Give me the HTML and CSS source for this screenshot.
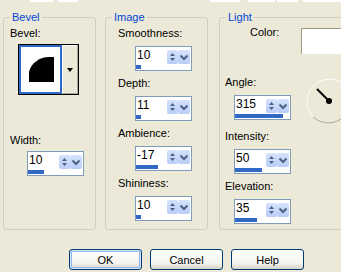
FILE: index.html
```html
<!DOCTYPE html>
<html lang="en">
<head>
    <meta charset="UTF-8">
    <title>Inner Bevel</title>
    <link rel="stylesheet" href="styles.css">
</head>
<body>
    <div class="dialog">
        <div class="top-strip">
            <span class="seg seg-a"></span>
            <span class="seg seg-b"></span>
            <span class="seg seg-c"></span>
            <span class="seg seg-d"></span>
            <span class="seg seg-e"></span>
            <span class="seg seg-f"></span>
        </div>

        <div class="groups">
            <fieldset class="group bevel">
                <legend>Bevel</legend>
                <div class="label first">Bevel:</div>
                <div class="preview">
                    <div class="preview-img">
                        <svg width="39" height="45" viewBox="0 0 39 45">
                            <path d="M8 35 V25 C10 16 19 10 28 10 H33 V35 Z" fill="#000"/>
                        </svg>
                    </div>
                    <div class="preview-drop"><span class="drop-arrow"></span></div>
                </div>
                <div class="label width-label">Width:</div>
                <div class="spin width-spin">
                    <div class="spin-main">
                        <span class="spin-value">10</span>
                        <span class="spin-btn">
                            <svg width="11" height="14" viewBox="0 0 11 14"><path d="M3 6 L5.5 3 L8 6 Z M3 8 L8 8 L5.5 11 Z" fill="#4d6185"/></svg>
                        </span>
                        <span class="spin-btn drop">
                            <svg width="12" height="14" viewBox="0 0 12 14"><polyline points="2.5,5.5 6,9 9.5,5.5" fill="none" stroke="#4d6185" stroke-width="2"/></svg>
                        </span>
                    </div>
                    <div class="spin-bar"><div class="fill" style="width: 16px"></div></div>
                </div>
            </fieldset>

            <fieldset class="group image">
                <legend>Image</legend>
                <div class="field first">
                    <div class="label">Smoothness:</div>
                    <div class="spin">
                        <div class="spin-main">
                            <span class="spin-value">10</span>
                            <span class="spin-btn">
                                <svg width="11" height="14" viewBox="0 0 11 14"><path d="M3 6 L5.5 3 L8 6 Z M3 8 L8 8 L5.5 11 Z" fill="#4d6185"/></svg>
                            </span>
                            <span class="spin-btn drop">
                                <svg width="12" height="14" viewBox="0 0 12 14"><polyline points="2.5,5.5 6,9 9.5,5.5" fill="none" stroke="#4d6185" stroke-width="2"/></svg>
                            </span>
                        </div>
                        <div class="spin-bar"><div class="fill" style="width: 5px"></div></div>
                    </div>
                </div>
                <div class="field">
                    <div class="label">Depth:</div>
                    <div class="spin">
                        <div class="spin-main">
                            <span class="spin-value">11</span>
                            <span class="spin-btn">
                                <svg width="11" height="14" viewBox="0 0 11 14"><path d="M3 6 L5.5 3 L8 6 Z M3 8 L8 8 L5.5 11 Z" fill="#4d6185"/></svg>
                            </span>
                            <span class="spin-btn drop">
                                <svg width="12" height="14" viewBox="0 0 12 14"><polyline points="2.5,5.5 6,9 9.5,5.5" fill="none" stroke="#4d6185" stroke-width="2"/></svg>
                            </span>
                        </div>
                        <div class="spin-bar"><div class="fill" style="width: 5px"></div></div>
                    </div>
                </div>
                <div class="field">
                    <div class="label">Ambience:</div>
                    <div class="spin">
                        <div class="spin-main">
                            <span class="spin-value">-17</span>
                            <span class="spin-btn">
                                <svg width="11" height="14" viewBox="0 0 11 14"><path d="M3 6 L5.5 3 L8 6 Z M3 8 L8 8 L5.5 11 Z" fill="#4d6185"/></svg>
                            </span>
                            <span class="spin-btn drop">
                                <svg width="12" height="14" viewBox="0 0 12 14"><polyline points="2.5,5.5 6,9 9.5,5.5" fill="none" stroke="#4d6185" stroke-width="2"/></svg>
                            </span>
                        </div>
                        <div class="spin-bar"><div class="fill" style="width: 22px"></div></div>
                    </div>
                </div>
                <div class="field">
                    <div class="label">Shininess:</div>
                    <div class="spin">
                        <div class="spin-main">
                            <span class="spin-value">10</span>
                            <span class="spin-btn">
                                <svg width="11" height="14" viewBox="0 0 11 14"><path d="M3 6 L5.5 3 L8 6 Z M3 8 L8 8 L5.5 11 Z" fill="#4d6185"/></svg>
                            </span>
                            <span class="spin-btn drop">
                                <svg width="12" height="14" viewBox="0 0 12 14"><polyline points="2.5,5.5 6,9 9.5,5.5" fill="none" stroke="#4d6185" stroke-width="2"/></svg>
                            </span>
                        </div>
                        <div class="spin-bar"><div class="fill" style="width: 5px"></div></div>
                    </div>
                </div>
            </fieldset>

            <fieldset class="group light">
                <legend>Light</legend>
                <div class="color-row">
                    <div class="label color-label">Color:</div>
                    <div class="swatch"></div>
                </div>
                <div class="angle-row">
                    <div class="field">
                        <div class="label">Angle:</div>
                        <div class="spin">
                            <div class="spin-main">
                                <span class="spin-value">315</span>
                                <span class="spin-btn">
                                    <svg width="11" height="14" viewBox="0 0 11 14"><path d="M3 6 L5.5 3 L8 6 Z M3 8 L8 8 L5.5 11 Z" fill="#4d6185"/></svg>
                                </span>
                                <span class="spin-btn drop">
                                    <svg width="12" height="14" viewBox="0 0 12 14"><polyline points="2.5,5.5 6,9 9.5,5.5" fill="none" stroke="#4d6185" stroke-width="2"/></svg>
                                </span>
                            </div>
                            <div class="spin-bar"><div class="fill" style="width: 48px"></div></div>
                        </div>
                    </div>
                    <svg class="dial" width="46" height="46" viewBox="0 0 46 46">
                        <path d="M38.9 7.1 A22.5 22.5 0 0 0 7.1 38.9" fill="none" stroke="#fff" stroke-width="1"/>
                        <path d="M7.1 38.9 A22.5 22.5 0 0 0 38.9 7.1" fill="none" stroke="#aca899" stroke-width="1"/>
                        <line x1="11" y1="11" x2="23" y2="23" stroke="#000" stroke-width="2"/>
                        <circle cx="23" cy="23" r="3" fill="#000"/>
                    </svg>
                </div>
                <div class="field">
                    <div class="label">Intensity:</div>
                    <div class="spin">
                        <div class="spin-main">
                            <span class="spin-value">50</span>
                            <span class="spin-btn">
                                <svg width="11" height="14" viewBox="0 0 11 14"><path d="M3 6 L5.5 3 L8 6 Z M3 8 L8 8 L5.5 11 Z" fill="#4d6185"/></svg>
                            </span>
                            <span class="spin-btn drop">
                                <svg width="12" height="14" viewBox="0 0 12 14"><polyline points="2.5,5.5 6,9 9.5,5.5" fill="none" stroke="#4d6185" stroke-width="2"/></svg>
                            </span>
                        </div>
                        <div class="spin-bar"><div class="fill" style="width: 27px"></div></div>
                    </div>
                </div>
                <div class="field">
                    <div class="label">Elevation:</div>
                    <div class="spin">
                        <div class="spin-main">
                            <span class="spin-value">35</span>
                            <span class="spin-btn">
                                <svg width="11" height="14" viewBox="0 0 11 14"><path d="M3 6 L5.5 3 L8 6 Z M3 8 L8 8 L5.5 11 Z" fill="#4d6185"/></svg>
                            </span>
                            <span class="spin-btn drop">
                                <svg width="12" height="14" viewBox="0 0 12 14"><polyline points="2.5,5.5 6,9 9.5,5.5" fill="none" stroke="#4d6185" stroke-width="2"/></svg>
                            </span>
                        </div>
                        <div class="spin-bar"><div class="fill" style="width: 22px"></div></div>
                    </div>
                </div>
            </fieldset>
        </div>

        <div class="buttons">
            <button class="btn default">OK</button>
            <button class="btn">Cancel</button>
            <button class="btn">Help</button>
        </div>
    </div>
</body>
</html>
```

FILE: styles.css
```css
body {
    margin: 0;
    background-color: #ece9d8;
    font-family: "Liberation Sans", Arial, sans-serif;
    font-size: 11px;
    color: #000;
    overflow: hidden;
}
.dialog {
    width: 341px;
    height: 272px;
    overflow: hidden;
}
.top-strip {
    display: flex;
    height: 2px;
}
.seg {
    display: block;
    flex-shrink: 0;
    height: 2px;
    background-color: #fff;
}
.seg-a {
    width: 23px;
    margin-left: 30px;
}
.seg-b {
    width: 20px;
    margin-left: 5px;
}
.seg-c {
    width: 30px;
    margin-left: 132px;
}
.seg-d {
    width: 27px;
    margin-left: 8px;
}
.seg-e {
    width: 21px;
    margin-left: 2px;
}
.seg-f {
    width: 40px;
    margin-left: 5px;
}
.groups {
    display: flex;
    align-items: flex-start;
    margin-top: 9px;
    padding-left: 3px;
}
.group {
    box-sizing: border-box;
    height: 219px;
    margin: 0;
    padding: 0;
    min-width: 0;
    flex-shrink: 0;
    border: 1px solid #d0d0bf;
    border-radius: 3px;
}
.group legend {
    margin-left: 6px;
    padding: 0 2px;
    color: #0046d5;
    line-height: 13px;
}
.bevel {
    width: 93px;
}
.image {
    width: 103px;
    margin-left: 9px;
}
.light {
    width: 140px;
    margin-left: 11px;
}
.label {
    line-height: 13px;
    white-space: nowrap;
}

/* bevel group */
.bevel .label {
    margin-left: 6px;
}
.bevel .label.first {
    margin-top: 3px;
}
.preview {
    display: flex;
    width: 61px;
    height: 51px;
    box-sizing: border-box;
    margin: 4px 0 0 14px;
    border: 1px solid #000;
}
.preview-img {
    width: 43px;
    box-sizing: border-box;
    border: 2px solid #316ac5;
    background-color: #fff;
}
.preview-img svg {
    display: block;
}
.preview-drop {
    flex: 1;
    display: flex;
    align-items: center;
    justify-content: center;
    border-left: 1px solid #fff;
    border-top: 1px solid #fff;
    border-right: 1px solid #aca899;
    border-bottom: 1px solid #aca899;
}
.drop-arrow {
    width: 0;
    height: 0;
    border-top: 4px solid #000;
    border-left: 3.5px solid transparent;
    border-right: 3.5px solid transparent;
}
.bevel .width-label {
    margin-top: 39px;
}
.width-spin {
    margin: 4px 0 0 23px;
}

/* spin boxes */
.spin {
    width: 57px;
    height: 25px;
    box-sizing: border-box;
    padding-top: 1px;
    border: 1px solid #7f9db9;
    background-color: #fff;
}
.spin-main {
    display: flex;
    height: 17px;
}
.spin-value {
    flex: 1;
    padding-left: 1px;
    font-size: 12px;
    line-height: 14px;
}
.spin-btn {
    display: block;
    width: 11px;
    height: 14px;
    margin-top: 2px;
    border-radius: 2px;
    background: linear-gradient(#d6e2fd, #b9cdf7);
}
.spin-btn.drop {
    width: 12px;
    margin-right: 1px;
}
.spin-btn svg {
    display: block;
}
.spin-bar {
    height: 4px;
}
.spin-bar .fill {
    height: 4px;
    background-color: #316ac5;
}

/* labelled fields */
.field {
    margin-top: 6px;
}
.field .spin {
    margin-top: 6px;
}
.image .field .label {
    margin-left: 12px;
}
.image .field .spin {
    margin-left: 29px;
}
.image .field.first {
    margin-top: 3px;
}

/* light group */
.color-row {
    display: flex;
    height: 46px;
    padding-top: 2px;
    box-sizing: border-box;
}
.color-label {
    width: 54px;
    margin-left: 30px;
}
.swatch {
    width: 60px;
    height: 26px;
    margin-top: 2px;
    box-sizing: border-box;
    border-left: 1px solid #9d9a85;
    border-top: 1px solid #9d9a85;
    background-color: #fff;
}
.angle-row {
    display: flex;
    align-items: flex-start;
}
.light .field .label {
    margin-left: 5px;
}
.light .field .spin {
    margin-left: 14px;
}
.dial {
    display: block;
    margin: 8px 0 0 15px;
}

/* dialog buttons */
.buttons {
    display: flex;
    gap: 8px;
    margin: 19px 0 0 69px;
}
.btn {
    width: 73px;
    height: 21px;
    padding: 0;
    border: 1px solid #003c74;
    border-radius: 3px;
    background: linear-gradient(#ffffff, #f4f3ee 70%, #d8d2c6);
    font-family: "Liberation Sans", Arial, sans-serif;
    font-size: 11px;
    color: #000;
}
.btn.default {
    box-shadow: inset 0 0 0 1px #cee3fc, inset 0 0 0 2px #98b6ea;
}
```
